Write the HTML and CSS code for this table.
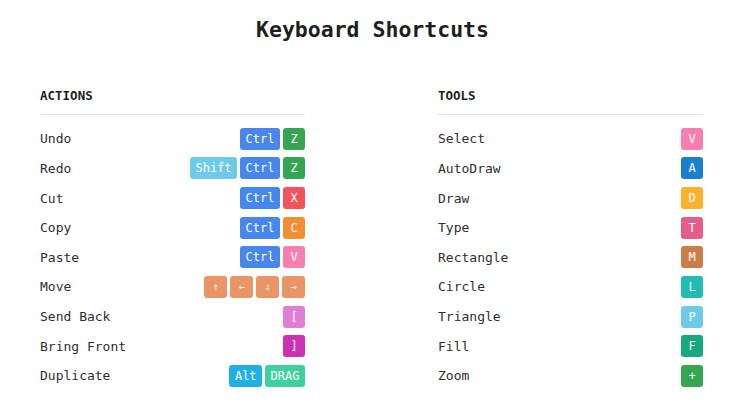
FILE: index.html
```html
<!DOCTYPE html>
<html>
<head>
<meta charset="utf-8">
<link rel="stylesheet" href="styles.css">
</head>
<body>
<h1 class="title">Keyboard Shortcuts</h1>
<div class="columns">
  <section class="col">
    <h2 class="heading">ACTIONS</h2>
    <div class="row"><span class="label">Undo</span><span class="keys"><kbd class="key k-blue">Ctrl</kbd><kbd class="key k-green">Z</kbd></span></div>
    <div class="row"><span class="label">Redo</span><span class="keys"><kbd class="key k-cyan">Shift</kbd><kbd class="key k-blue">Ctrl</kbd><kbd class="key k-green">Z</kbd></span></div>
    <div class="row"><span class="label">Cut</span><span class="keys"><kbd class="key k-blue">Ctrl</kbd><kbd class="key k-red">X</kbd></span></div>
    <div class="row"><span class="label">Copy</span><span class="keys"><kbd class="key k-blue">Ctrl</kbd><kbd class="key k-orange">C</kbd></span></div>
    <div class="row"><span class="label">Paste</span><span class="keys"><kbd class="key k-blue">Ctrl</kbd><kbd class="key k-pink">V</kbd></span></div>
    <div class="row"><span class="label">Move</span><span class="keys"><kbd class="key k-salmon arrow">↑</kbd><kbd class="key k-salmon arrow">←</kbd><kbd class="key k-salmon arrow">↓</kbd><kbd class="key k-salmon arrow">→</kbd></span></div>
    <div class="row"><span class="label">Send Back</span><span class="keys"><kbd class="key k-orchid">[</kbd></span></div>
    <div class="row"><span class="label">Bring Front</span><span class="keys"><kbd class="key k-magenta">]</kbd></span></div>
    <div class="row"><span class="label">Duplicate</span><span class="keys"><kbd class="key k-sky">Alt</kbd><kbd class="key k-mint">DRAG</kbd></span></div>
  </section>
  <section class="col">
    <h2 class="heading">TOOLS</h2>
    <div class="row"><span class="label">Select</span><span class="keys"><kbd class="key k-pink">V</kbd></span></div>
    <div class="row"><span class="label">AutoDraw</span><span class="keys"><kbd class="key k-dblue">A</kbd></span></div>
    <div class="row"><span class="label">Draw</span><span class="keys"><kbd class="key k-amber">D</kbd></span></div>
    <div class="row"><span class="label">Type</span><span class="keys"><kbd class="key k-rose">T</kbd></span></div>
    <div class="row"><span class="label">Rectangle</span><span class="keys"><kbd class="key k-brown">M</kbd></span></div>
    <div class="row"><span class="label">Circle</span><span class="keys"><kbd class="key k-teal">L</kbd></span></div>
    <div class="row"><span class="label">Triangle</span><span class="keys"><kbd class="key k-cyan">P</kbd></span></div>
    <div class="row"><span class="label">Fill</span><span class="keys"><kbd class="key k-jade">F</kbd></span></div>
    <div class="row"><span class="label">Zoom</span><span class="keys"><kbd class="key k-green">+</kbd></span></div>
  </section>
</div>
</body>
</html>
```
FILE: styles.css
```css
* { box-sizing: border-box; }
body {
  margin: 0;
  background: #fff;
  font-family: "DejaVu Sans Mono", "Liberation Mono", monospace;
  color: #2b2b2b;
}
.title {
  margin: 17px 0 0;
  text-align: center;
  font-size: 21.5px;
  line-height: 26px;
  font-weight: bold;
  color: #1e1e1e;
}
.columns {
  display: grid;
  grid-template-columns: 265px 265px;
  column-gap: 133px;
  justify-content: center;
  margin-top: 45px;
  padding-right: 2px;
}
.heading {
  margin: 0 0 9px;
  font-size: 12.5px;
  line-height: 16px;
  font-weight: bold;
  color: #1e1e1e;
  padding-bottom: 10px;
  border-bottom: 1px solid #e6e6e6;
}
.row {
  display: flex;
  align-items: center;
  justify-content: space-between;
  height: 29.625px;
}
.label {
  font-size: 13px;
  color: #2e2e2e;
}
.keys {
  display: flex;
  gap: 3px;
}
.key {
  display: inline-flex;
  align-items: center;
  justify-content: center;
  min-width: 22px;
  height: 22px;
  padding: 0 5.5px;
  border-radius: 3px;
  font-family: "DejaVu Sans Mono", monospace;
  font-size: 12px;
  color: #fff;
}
.arrow { font-size: 10px; width: 23px; }
.k-blue { background: #4786ec; }
.k-green { background: #35a551; }
.k-cyan { background: #6dcbe8; }
.k-red { background: #f3545c; }
.k-orange { background: #f58d32; }
.k-pink { background: #f77eb0; }
.k-salmon { background: #e99566; }
.k-orchid { background: #e07fd6; }
.k-magenta { background: #cd30b2; }
.k-sky { background: #21b0e2; }
.k-mint { background: #3fd0a0; }
.k-dblue { background: #1b7fcf; }
.k-amber { background: #fab12d; }
.k-rose { background: #e45e88; }
.k-brown { background: #c97d47; }
.k-teal { background: #22bdb2; }
.k-jade { background: #18a780; }
```
